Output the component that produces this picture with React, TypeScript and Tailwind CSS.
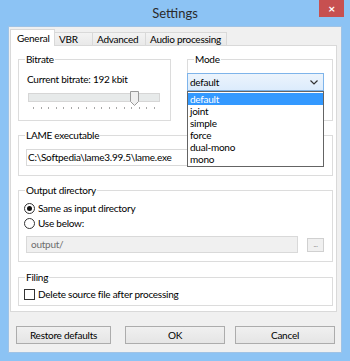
import { useState } from 'react';

const tabs = ['General', 'VBR', 'Advanced', 'Audio processing'];
const tabWidths = ['w-[45px]', 'w-[39px]', 'w-[54px]', 'w-[82px]'];
const modes = ['default', 'joint', 'simple', 'force', 'dual-mono', 'mono'];

function Radio({ checked, label }: { checked?: boolean; label: string }) {
  return (
    <label className="flex h-[14px] items-center">
      <span className="ml-[5px] flex h-[11px] w-[11px] items-center justify-center rounded-full border border-[#333] bg-white">
        {checked && <span className="h-[5px] w-[5px] rounded-full bg-[#111]" />}
      </span>
      <span className="ml-[3px]">{label}</span>
    </label>
  );
}

export default function App() {
  const [tab] = useState(0);

  return (
    <div className="flex h-[361px] w-[350px] flex-col overflow-hidden bg-[#8cc3f4] font-['Lato',sans-serif] text-[10px] leading-[14px] tracking-[-0.25px] text-black">
      {/* title bar */}
      <div className="relative flex h-[26px] items-center justify-center">
        <span className="text-[13px] tracking-normal text-[#2b2b2b]">Settings</span>
        <div className="absolute right-[6px] top-0 flex h-[17px] w-[25px] items-center justify-center bg-[#c75050] text-[12px] font-bold leading-none text-white">
          ×
        </div>
      </div>

      {/* client area */}
      <div className="mx-[8px] flex h-[327px] flex-col border border-[#9fc3e6] bg-[#f0f0f0] px-px">
        {/* tabs */}
        <div className="mt-[2px] flex h-[17px] items-end">
          {tabs.map((t, i) =>
            i === tab ? (
              <div
                key={t}
                className={`relative z-10 h-[17px] ${tabWidths[i]} whitespace-nowrap border border-b-0 border-[#d9d9d9] bg-white pl-[6px] pt-[1px]`}
              >
                {t}
              </div>
            ) : (
              <div
                key={t}
                className={`h-[14px] ${tabWidths[i]} -ml-px whitespace-nowrap border border-b-0 border-[#d9d9d9] bg-gradient-to-b from-[#f3f3f3] to-[#e8e8e8] pl-[4px] leading-[13px]`}
              >
                {t}
              </div>
            )
          )}
        </div>

        {/* panel */}
        <div className="-mt-px flex h-[267px] w-[327px] flex-col border border-[#d9d9d9] bg-white pl-[7px] pt-[6px]">
          <div className="flex">
            <fieldset className="h-[69px] w-[153px] border border-[#dcdcdc]">
              <legend className="ml-[6px] px-px">Bitrate</legend>
              <div className="ml-[8px] mt-[6px]">Current bitrate: 192 kbit</div>
              <div className="relative ml-[9px] mt-[7px] h-[9px] w-[132px] border border-[#d6d6d6] bg-[#e7eaea]">
                <svg className="absolute left-[101px] top-[-3px]" width="9" height="15" viewBox="0 0 9 15">
                  <path d="M0.5 0.5H8.5V10.5L4.5 14.5L0.5 10.5Z" fill="#f0f0f0" stroke="#9a9a9a" />
                </svg>
              </div>
              <div className="ml-[14px] mt-[5px] flex w-[122px] justify-between">
                {Array.from({ length: 17 }).map((_, i) => (
                  <span key={i} className="h-[2px] w-px bg-[#a8a8a8]" />
                ))}
              </div>
            </fieldset>

            <fieldset className="ml-[16px] h-[69px] w-[146px] border border-[#dcdcdc]">
              <legend className="ml-[6px] px-px">Mode</legend>
              <div className="relative -ml-px mt-[7px] flex h-[18px] w-[137px] items-center justify-between border border-[#7eb4ea] bg-gradient-to-b from-[#ecf4fc] to-[#dcecfc] pl-[2px] pr-[5px]">
                <span>default</span>
                <svg width="8" height="5" viewBox="0 0 8 5">
                  <path d="M0.5 0.5L4 4L7.5 0.5" fill="none" stroke="#333" strokeWidth="1.2" />
                </svg>
                <ul className="absolute left-[-1px] top-[17px] z-20 w-[137px] border border-[#646464] bg-white pb-px pt-px">
                  {modes.map((m, i) => (
                    <li
                      key={m}
                      className={`h-[12px] overflow-hidden pl-[2px] leading-[12px] ${i === 0 ? 'bg-[#3399ff] text-white' : ''}`}
                    >
                      {m}
                    </li>
                  ))}
                </ul>
              </div>
            </fieldset>
          </div>

          <fieldset className="mt-[7px] h-[48px] w-[315px] border border-[#dcdcdc]">
            <legend className="ml-[6px] px-px">LAME executable</legend>
            <div className="mt-[7px] flex items-center">
              <div className="ml-[7px] h-[17px] w-[272px] border border-[#d9d9d9] bg-white pl-[1px] leading-[15px]">
                C:\Softpedia\lame3.99.5\lame.exe
              </div>
              <div className="ml-[9px] h-[14px] w-[17px] border border-[#d0d0d0] bg-[#f0f0f0]" />
            </div>
          </fieldset>

          <fieldset className="mt-[7px] h-[79px] w-[315px] border border-[#dcdcdc]">
            <legend className="ml-[6px] px-px">Output directory</legend>
            <div className="mt-[4px] flex flex-col gap-px">
              <Radio checked label="Same as input directory" />
              <Radio label="Use below:" />
            </div>
            <div className="mt-[6px] flex items-center">
              <div className="ml-[7px] h-[17px] w-[272px] border border-[#d9d9d9] bg-[#f0f0f0] pl-[4px] leading-[15px] text-[#6d6d6d]">
                output/
              </div>
              <div className="ml-[9px] flex h-[14px] w-[17px] items-center justify-center border border-[#d0d0d0] bg-[#f0f0f0] text-[7px] leading-none text-[#888]">
                ...
              </div>
            </div>
          </fieldset>

          <fieldset className="mt-[8px] h-[36px] w-[315px] border border-[#dcdcdc]">
            <legend className="ml-[6px] px-px">Filing</legend>
            <label className="mt-[3px] flex h-[14px] items-center">
              <span className="ml-[5px] h-[11px] w-[11px] border border-[#333] bg-white" />
              <span className="ml-[3px]">Delete source file after processing</span>
            </label>
          </fieldset>
        </div>

        {/* buttons */}
        <div className="mt-[14px] flex pl-[6px]">
          <button className="h-[18px] w-[95px] border border-[#acacac] bg-gradient-to-b from-[#f0f0f0] to-[#e5e5e5] leading-[16px]">
            Restore defaults
          </button>
          <button className="ml-[14px] h-[18px] w-[100px] border border-[#acacac] bg-gradient-to-b from-[#f0f0f0] to-[#e5e5e5] leading-[16px]">
            OK
          </button>
          <button className="ml-[10px] h-[18px] w-[100px] border border-[#acacac] bg-gradient-to-b from-[#f0f0f0] to-[#e5e5e5] leading-[16px]">
            Cancel
          </button>
        </div>
      </div>
    </div>
  );
}
